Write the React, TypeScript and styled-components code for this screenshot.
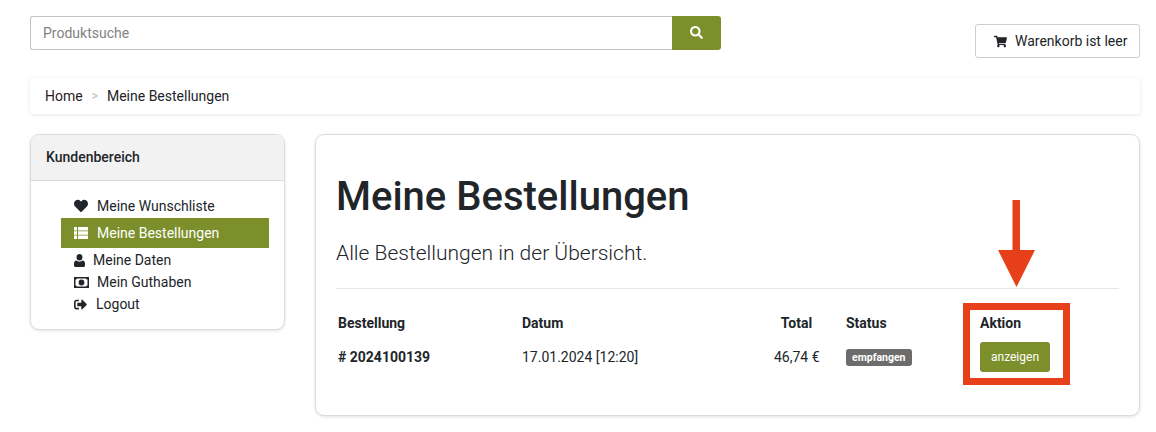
import React from "react";
import styled, { createGlobalStyle } from "styled-components";
import { FaSearch, FaShoppingCart, FaHeart, FaSignOutAlt } from "react-icons/fa";

const GREEN = "#7d8f2b";
const RED = "#e63f1a";

const GlobalStyle = createGlobalStyle`
  html, body {
    margin: 0;
    padding: 0;
    background: #fff;
    color: #212529;
    font-family: Roboto, "Liberation Sans", sans-serif;
    font-size: 14px;
  }
  * { box-sizing: border-box; }
`;

const Page = styled.div`
  width: 1156px;
  height: 432px;
  padding: 16px 16px 0 30px;
  overflow: hidden;
`;

const TopBar = styled.div`
  display: flex;
  justify-content: space-between;
  align-items: flex-start;
  height: 62px;
`;

const SearchGroup = styled.form`
  display: flex;
  width: 691px;
  height: 34px;
`;

const SearchInput = styled.input`
  flex: 1;
  min-width: 0;
  padding: 0 12px;
  border: 1px solid #c4c4c4;
  border-right: 0;
  border-radius: 3px 0 0 3px;
  font: 400 14px Roboto, sans-serif;
  color: #212529;
  outline: none;
  &::placeholder {
    color: #828282;
    opacity: 1;
  }
`;

const SearchButton = styled.button`
  display: flex;
  align-items: center;
  justify-content: center;
  width: 49px;
  border: 0;
  border-radius: 0 3px 3px 0;
  background: ${GREEN};
  color: #fff;
  font-size: 13px;
  padding: 0 0 2px;
`;

const CartButton = styled.button`
  display: flex;
  align-items: center;
  gap: 8px;
  height: 34px;
  width: 165px;
  margin-top: 8px;
  padding: 0 0 0 18px;
  border: 1px solid #cfcfcf;
  border-radius: 3px;
  background: #fff;
  color: #212529;
  font: 400 14px Roboto, sans-serif;
`;

const Breadcrumb = styled.nav`
  display: flex;
  align-items: center;
  height: 36px;
  padding: 0 15px;
  border-radius: 3px;
  background: #fff;
  box-shadow: 0 1px 4px rgba(0, 0, 0, 0.1);
  font-size: 14px;
`;

const CrumbLink = styled.a`
  color: #2a1a1f;
`;

const CrumbSeparator = styled.span`
  margin: 0 9px;
  color: #b5b5b5;
  font-size: 12px;
`;

const CrumbCurrent = styled.span`
  color: #212529;
`;

const Columns = styled.div`
  display: flex;
  gap: 30px;
  align-items: flex-start;
  margin-top: 20px;
`;

const Sidebar = styled.aside`
  width: 255px;
  height: 196px;
  border: 1px solid #dcdcdc;
  border-radius: 9px;
  box-shadow: 0 1px 3px rgba(0, 0, 0, 0.12);
  overflow: hidden;
  background: #fff;
`;

const SidebarHead = styled.div`
  display: flex;
  align-items: center;
  height: 46px;
  padding: 0 0 2px 15px;
  background: #f2f2f2;
  border-bottom: 1px solid #dcdcdc;
  font-weight: 500;
  font-size: 14px;
`;

const Menu = styled.ul`
  list-style: none;
  margin: 0;
  padding: 10px 15px 0 30px;
`;

const MenuItem = styled.li<{ $active?: boolean; $tall?: boolean; $gap: number }>`
  display: flex;
  align-items: center;
  gap: ${(p) => p.$gap}px;
  height: ${(p) => (p.$active ? 30 : p.$tall ? 27 : 22)}px;
  margin-bottom: ${(p) => (p.$active ? 1 : 0)}px;
  padding: ${(p) => (p.$tall ? "2px" : "0")} 0 0 13px;
  background: ${(p) => (p.$active ? GREEN : "transparent")};
  color: ${(p) => (p.$active ? "#fff" : "#212529")};
  font-size: 14px;
  svg {
    flex: none;
  }
`;

const Main = styled.main`
  position: relative;
  width: 825px;
  height: 282px;
  padding: 37px 20px 0;
  border: 1px solid #dcdcdc;
  border-radius: 9px;
  box-shadow: 0 1px 3px rgba(0, 0, 0, 0.12);
  background: #fff;
`;

const Title = styled.h1`
  margin: 0;
  font-size: 40px;
  font-weight: 500;
  line-height: 50px;
  color: #212529;
`;

const Lead = styled.p`
  margin: 17px 0 0;
  font-size: 21px;
  font-weight: 300;
  line-height: 28px;
  color: #212529;
`;

const Divider = styled.hr`
  margin: 21px 0 0;
  border: 0;
  border-top: 1px solid #e6e6e6;
`;

const OrderTable = styled.div`
  display: grid;
  grid-template-columns: 184px 252px 72px 134px 90px;
  grid-auto-rows: 34px;
  align-items: center;
  margin-top: 17px;
  padding-left: 2px;
  font-size: 14px;
`;

const HeadCell = styled.div<{ $center?: boolean }>`
  font-weight: 700;
  white-space: nowrap;
  ${(p) => p.$center && "text-align: center; padding-right: 27px;"}
`;

const Cell = styled.div<{ $center?: boolean; $strong?: boolean }>`
  font-weight: ${(p) => (p.$strong ? 700 : 400)};
  white-space: nowrap;
  ${(p) => p.$center && "text-align: center; padding-right: 27px;"}
`;

const StatusBadge = styled.span`
  display: inline-block;
  padding: 0 6px;
  height: 17px;
  line-height: 17px;
  border-radius: 3px;
  background: #6c6c6c;
  color: #fff;
  font-size: 10.5px;
  font-weight: 700;
`;

const ShowButton = styled.button`
  width: 70px;
  height: 30px;
  padding: 0;
  border: 0;
  border-radius: 3px;
  background: ${GREEN};
  color: #fff;
  font: 400 12px Roboto, sans-serif;
`;

/* annotation drawn over the screenshot */
const Marker = styled.div`
  position: absolute;
  left: 647px;
  top: 168px;
  width: 107px;
  height: 82px;
  border: 7px solid ${RED};
`;

const ArrowMark = styled.svg`
  position: absolute;
  left: 682px;
  top: 65px;
`;

const ListIcon = () => (
  <svg width="14" height="12" viewBox="0 0 14 12" fill="currentColor">
    <path d="M0 0h3v3.4H0zM4 0h10v3.4H4zM0 4.3h3v3.4H0zM4 4.3h10v3.4H4zM0 8.6h3V12H0zM4 8.6h10V12H4z" />
  </svg>
);

const UserIcon = () => (
  <svg width="11" height="13" viewBox="0 0 11 13" fill="currentColor">
    <ellipse cx="5.5" cy="3.2" rx="2.9" ry="3.2" />
    <path d="M2.4 6.6c.8.7 1.9 1.1 3.1 1.1s2.3-.4 3.1-1.1c1.500.2 2.400 1.400 2.400 3.400v1.500c0 .900-.700 1.500-1.500 1.500h-8C.700 13 0 12.400 0 11.500V10c0-2 .900-3.200 2.400-3.400z" />
  </svg>
);

const MoneyIcon = () => (
  <svg width="15" height="11" viewBox="0 0 15 11" fill="currentColor">
    <path
      fillRule="evenodd"
      d="M0 0h15v11H0zM1.500 2.600v5.800c.900 0 1.300.5 1.300 1.200h9.400c0-.7.400-1.200 1.300-1.200V2.600c-.900 0-1.300-.5-1.300-1.200H2.800c0 .7-.4 1.200-1.300 1.200zM7.500 2.600a2.900 2.900 0 1 1 0 5.800 2.900 2.900 0 0 1 0-5.800z"
    />
  </svg>
);

const App: React.FC = () => (
  <>
    <GlobalStyle />
    <Page>
      <TopBar>
        <SearchGroup>
          <SearchInput placeholder="Produktsuche" />
          <SearchButton type="button">
            <FaSearch />
          </SearchButton>
        </SearchGroup>
        <CartButton>
          <FaShoppingCart size={13} />
          Warenkorb ist leer
        </CartButton>
      </TopBar>
      <Breadcrumb>
        <CrumbLink>Home</CrumbLink>
        <CrumbSeparator>&gt;</CrumbSeparator>
        <CrumbCurrent>Meine Bestellungen</CrumbCurrent>
      </Breadcrumb>
      <Columns>
        <Sidebar>
          <SidebarHead>Kundenbereich</SidebarHead>
          <Menu>
            <MenuItem $gap={9} $tall>
              <FaHeart size={14} /> Meine Wunschliste
            </MenuItem>
            <MenuItem $gap={9} $active>
              <ListIcon /> Meine Bestellungen
            </MenuItem>
            <MenuItem $gap={8}>
              <UserIcon /> Meine Daten
            </MenuItem>
            <MenuItem $gap={8}>
              <MoneyIcon /> Mein Guthaben
            </MenuItem>
            <MenuItem $gap={9}>
              <FaSignOutAlt size={13} /> Logout
            </MenuItem>
          </Menu>
        </Sidebar>
        <Main>
          <Title>Meine Bestellungen</Title>
          <Lead>Alle Bestellungen in der Übersicht.</Lead>
          <Divider />
          <OrderTable>
            <HeadCell>Bestellung</HeadCell>
            <HeadCell>Datum</HeadCell>
            <HeadCell $center>Total</HeadCell>
            <HeadCell>Status</HeadCell>
            <HeadCell>Aktion</HeadCell>
            <Cell $strong># 2024100139</Cell>
            <Cell>17.01.2024 [12:20]</Cell>
            <Cell $center>46,74 €</Cell>
            <Cell>
              <StatusBadge>empfangen</StatusBadge>
            </Cell>
            <Cell>
              <ShowButton>anzeigen</ShowButton>
            </Cell>
          </OrderTable>
          <ArrowMark width="37" height="87" viewBox="0 0 37 87">
            <path d="M14.500 0h7.500v50h15L18.500 87 0 50h14.500z" fill={RED} />
          </ArrowMark>
          <Marker />
        </Main>
      </Columns>
    </Page>
  </>
);

export default App;
